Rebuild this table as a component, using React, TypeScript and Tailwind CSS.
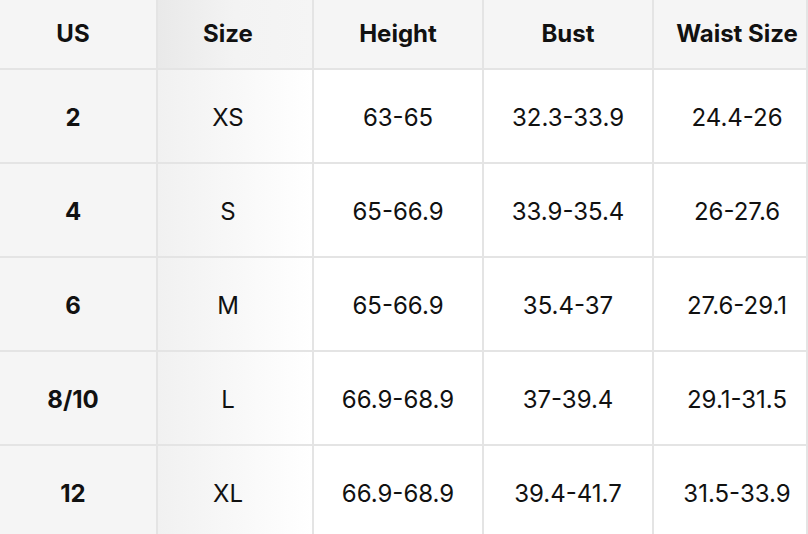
import React from "react";

const headers = ["US", "Size", "Height", "Bust", "Waist Size"];
const rows = [
  ["2", "XS", "63-65", "32.3-33.9", "24.4-26"],
  ["4", "S", "65-66.9", "33.9-35.4", "26-27.6"],
  ["6", "M", "65-66.9", "35.4-37", "27.6-29.1"],
  ["8/10", "L", "66.9-68.9", "37-39.4", "29.1-31.5"],
  ["12", "XL", "66.9-68.9", "39.4-41.7", "31.5-33.9"],
];

const colPad = ["pr-[10px]", "pr-[14px]", "", "", "pl-[14px]"];

export default function App() {
  return (
    <div
      className="w-[808px] h-[534px] overflow-hidden bg-white text-[#111]"
      style={{ fontFamily: "Inter, 'Liberation Sans', sans-serif" }}
    >
      <div className="grid grid-cols-[158px_156px_170px_170px_1fr] auto-rows-[94px] grid-rows-[70px]">
        {headers.map((h, i) => (
          <div
            key={h}
            className={
              "flex items-center justify-center border-b-2 border-r-2 border-[#e4e4e4] text-[24px] font-bold whitespace-nowrap " +
              colPad[i] +
              " " +
              (i === 1
                ? "bg-gradient-to-r from-[#e9e9e9] via-[#f3f3f3] to-[#f5f5f5]"
                : "bg-[#f5f5f5]")
            }
          >
            {h}
          </div>
        ))}
        {rows.map((r) =>
          r.map((c, i) => (
            <div
              key={r[0] + i}
              className={
                "flex items-center justify-center border-b-2 border-r-2 border-[#e4e4e4] text-[24px] whitespace-nowrap pt-[3px] " +
                colPad[i] +
                " " +
                (i === 0
                  ? "bg-[#f5f5f5] font-bold"
                  : i === 1
                  ? "bg-gradient-to-r from-[#f1f1f1] via-[#f8f8f8] to-white"
                  : "bg-white")
              }
            >
              {c}
            </div>
          ))
        )}
      </div>
    </div>
  );
}
